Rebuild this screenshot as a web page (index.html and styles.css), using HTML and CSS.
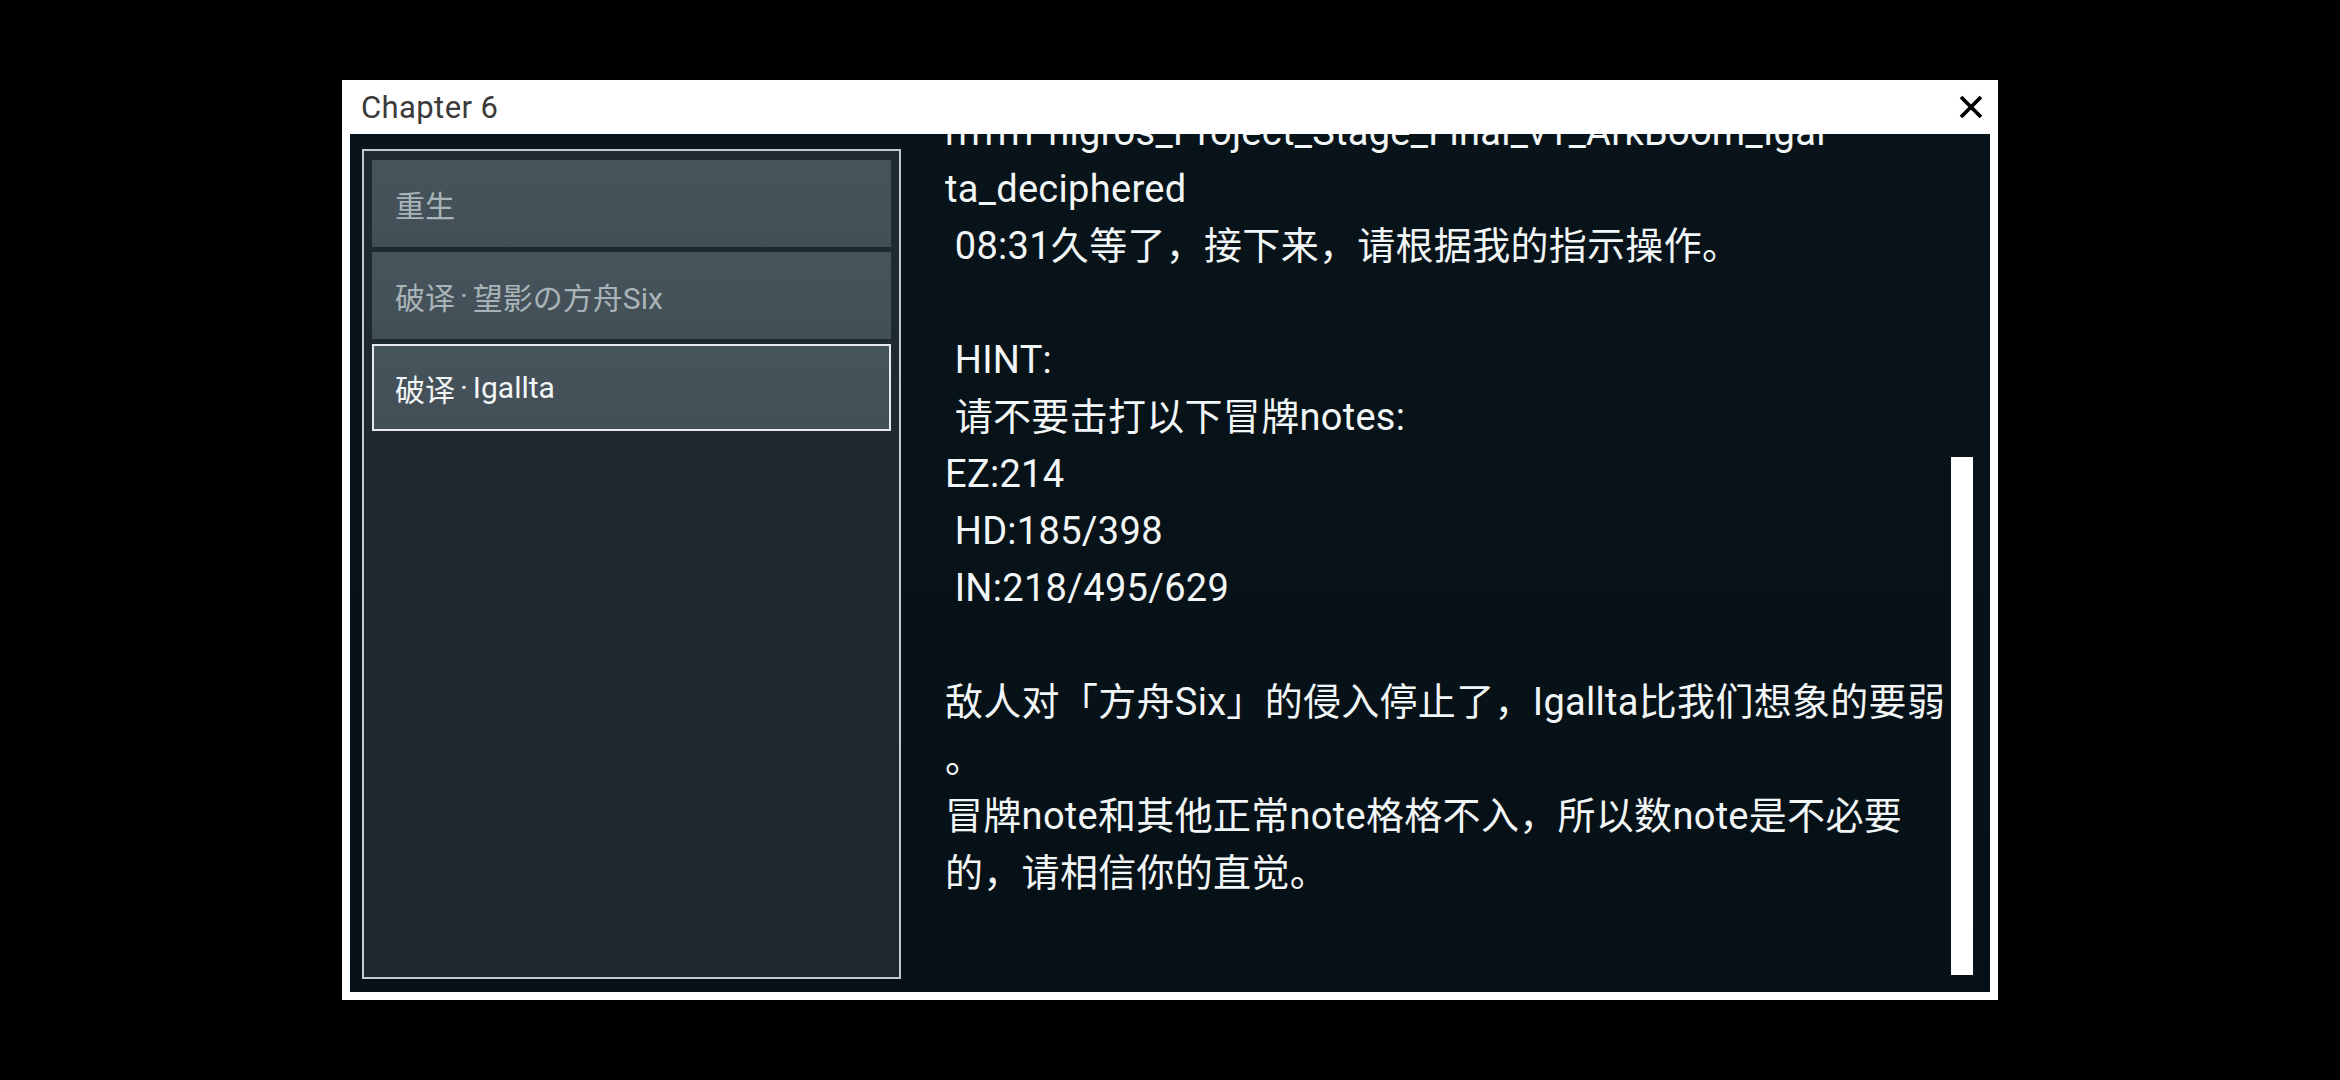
FILE: index.html
```html
<!DOCTYPE html>
<html lang="zh">
<head>
    <meta charset="UTF-8">
    <title>Chapter 6</title>
    <link rel="stylesheet" href="styles.css">
</head>
<body>
    <div class="window">
        <div class="titlebar">
            <span class="title">Chapter 6</span>
            <button class="close-btn" aria-label="Close">
                <svg width="24" height="24" viewBox="0 0 24 24">
                    <path d="M2 2 L22 22 M22 2 L2 22" stroke="#000" stroke-width="3.8" fill="none"/>
                </svg>
            </button>
        </div>

        <div class="window-body">
            <div class="chapter-list">
                <div class="chapter-item">重生</div>
                <div class="chapter-item">破译<span class="sep">·</span>望影の方舟Six</div>
                <div class="chapter-item active">破译<span class="sep">·</span>Igallta</div>
            </div>

            <div class="reader">
<div class="reader-text">rrrrrrPhigros_Project_Stage_Final_v1_ArkBoom_Igal
ta_deciphered
 08:31久等了，接下来，请根据我的指示操作。

 HINT:
 请不要击打以下冒牌notes:
EZ:214
 HD:185/398
 IN:218/495/629

敌人对「方舟Six」的侵入停止了，Igallta比我们想象的要弱
。
冒牌note和其他正常note格格不入，所以数note是不必要
的，请相信你的直觉。</div>
            </div>

            <div class="scrollbar">
                <div class="scroll-thumb"></div>
            </div>
        </div>
    </div>
</body>
</html>
```

FILE: styles.css
```css
html, body {
    height: 100%;
}
body {
    margin: 0;
    background: #000;
    display: flex;
    align-items: center;
    justify-content: center;
    font-family: Roboto, "Noto Sans CJK SC", sans-serif;
}
.window {
    width: 1656px;
    height: 920px;
    box-sizing: border-box;
    background: #fff;
    padding: 0 8px 8px;
    display: flex;
    flex-direction: column;
}
.titlebar {
    height: 54px;
    flex-shrink: 0;
    display: flex;
    align-items: center;
    justify-content: space-between;
    padding: 0 7px 0 11px;
}
.title {
    font-size: 31px;
    letter-spacing: 0.4px;
    color: #3a3a3a;
}
.close-btn {
    background: none;
    border: none;
    padding: 0;
    width: 24px;
    height: 24px;
    cursor: pointer;
}
.close-btn svg {
    display: block;
}
.window-body {
    flex: 1;
    min-height: 0;
    display: flex;
    background: linear-gradient(180deg, #08141a 0%, #061117 100%);
}
.chapter-list {
    width: 539px;
    box-sizing: border-box;
    margin: 15px 0 13px 12px;
    border: 2px solid #c3c9cc;
    background: linear-gradient(180deg, #1f2b31 0%, #1e282d 100%);
    padding: 9px 8px;
    display: flex;
    flex-direction: column;
    gap: 5px;
}
.chapter-item {
    height: 87px;
    box-sizing: border-box;
    display: flex;
    align-items: center;
    padding-left: 23px;
    background: linear-gradient(180deg, #46545c 0%, #434f57 100%);
    color: #a9b4b9;
    font-size: 30px;
}
.chapter-item .sep {
    padding: 0 5px;
}
.chapter-item.active {
    border: 2px solid #e6eaec;
    padding-left: 21px;
    color: #f2f5f6;
}
.reader {
    flex: 1;
    min-width: 0;
    margin-left: 44px;
    overflow: hidden;
}
.reader-text {
    margin-top: -30px;
    white-space: pre;
    font-size: 38px;
    line-height: 57px;
    letter-spacing: 0.3px;
    color: #f3f6f7;
}
.scrollbar {
    width: 22px;
    margin: 0 17px 17px 0;
    display: flex;
    flex-direction: column;
    justify-content: flex-end;
}
.scroll-thumb {
    height: 518px;
    background: #fff;
}
```
